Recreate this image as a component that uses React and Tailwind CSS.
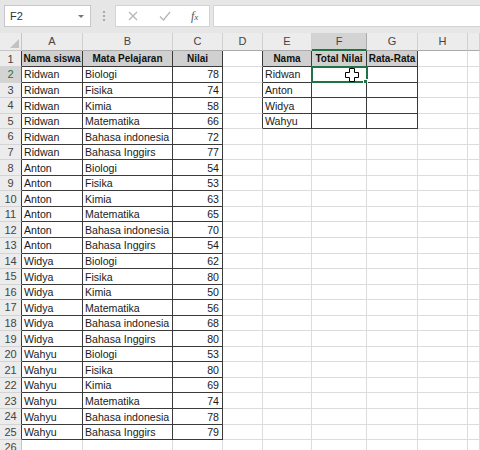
import React from 'react';

// data sheet: nama siswa, mata pelajaran, nilai
const DATA = [
  ['Ridwan', 'Biologi', 78], ['Ridwan', 'Fisika', 74], ['Ridwan', 'Kimia', 58],
  ['Ridwan', 'Matematika', 66], ['Ridwan', 'Bahasa indonesia', 72], ['Ridwan', 'Bahasa Inggirs', 77],
  ['Anton', 'Biologi', 54], ['Anton', 'Fisika', 53], ['Anton', 'Kimia', 63],
  ['Anton', 'Matematika', 65], ['Anton', 'Bahasa indonesia', 70], ['Anton', 'Bahasa Inggirs', 54],
  ['Widya', 'Biologi', 62], ['Widya', 'Fisika', 80], ['Widya', 'Kimia', 50],
  ['Widya', 'Matematika', 56], ['Widya', 'Bahasa indonesia', 68], ['Widya', 'Bahasa Inggirs', 80],
  ['Wahyu', 'Biologi', 53], ['Wahyu', 'Fisika', 80], ['Wahyu', 'Kimia', 69],
  ['Wahyu', 'Matematika', 74], ['Wahyu', 'Bahasa indonesia', 78], ['Wahyu', 'Bahasa Inggirs', 79],
];

const SUMMARY = ['Ridwan', 'Anton', 'Widya', 'Wahyu'];
const COLS = ['A', 'B', 'C', 'D', 'E', 'F', 'G', 'H', ''];
const GRID = 'grid grid-cols-[22px_61px_90px_50px_40px_49px_55px_51px_50px_12px] grid-rows-1';

const inTable = (r, c) => (r >= 1 && r <= 25 && c >= 1 && c <= 3) || (r >= 1 && r <= 5 && c >= 5 && c <= 7);

// text + alignment for one cell
const cellContent = (r, c) => {
  if (r === 1) {
    const head = { 1: 'Nama siswa', 2: 'Mata Pelajaran', 3: 'Nilai', 5: 'Nama', 6: 'Total Nilai', 7: 'Rata-Rata' };
    return head[c] ? { text: head[c], head: true } : null;
  }
  const d = DATA[r - 2];
  if (d && c === 1) return { text: d[0] };
  if (d && c === 2) return { text: d[1] };
  if (d && c === 3) return { text: d[2], right: true };
  if (c === 5 && r <= 5) return { text: SUMMARY[r - 2] };
  return null;
};

const Cell = ({ r, c }) => {
  const dark = inTable(r, c) || (c === 4 && r <= 5) || (c === 0 && r <= 25 && r !== 2);
  const darkBottom = inTable(r, c);
  const content = cellContent(r, c);

  if (c === 0) {
    return (
      <div
        className={`flex min-h-0 items-center justify-center overflow-hidden border-b border-r border-b-[#d4d4d4] pt-[1px] text-[11px] leading-none ${
          r === 2 ? 'bg-[#d3d3d3] text-[#217346] border-r-[#217346]' : 'bg-[#ececec] text-[#444] ' + (dark ? 'border-r-[#3a3a3a]' : 'border-r-[#c6c6c6]')
        }`}
      >
        {r}
      </div>
    );
  }

  return (
    <div
      className={`flex min-h-0 items-center overflow-visible whitespace-nowrap border-b border-r px-[2px] pt-[1px] leading-none ${
        dark ? 'border-r-[#3a3a3a]' : 'border-r-[#dadcdd]'
      } ${darkBottom ? 'border-b-[#3a3a3a]' : 'border-b-[#dadcdd]'} ${
        content && content.head ? 'justify-center bg-[#d0d0d0] text-[10px] font-bold text-[#111]' : 'bg-white text-[10.6px] text-[#1a1a1a]'
      } ${content && content.right ? 'justify-end pr-[3px]' : ''}`}
    >
      {content ? content.text : ''}
    </div>
  );
};

const PlusCursor = () => (
  <svg width="14" height="14" viewBox="0 0 14 14" className="absolute left-[345px] top-[1px]">
    <path d="M4.5 0.5h5v4h4v5h-4v4h-5v-4h-4v-5h4z" fill="#fff" stroke="#000" strokeWidth="1" />
  </svg>
);

const FormulaBar = () => (
  <div className="flex h-[33px] items-start bg-[#e6e6e6] pt-[5px] leading-none">
    <div className="ml-[4px] flex h-[22px] w-[87px] items-center justify-between border border-[#c8c8c8] bg-white pl-[5px] pr-[6px] text-[11px] text-[#333]">
      <span>F2</span>
      <span className="h-0 w-0 border-x-[3px] border-t-[3px] border-x-transparent border-t-[#777]" />
    </div>
    <div className="ml-[11px] mt-[4px] flex h-[14px] w-[4px] flex-col items-center justify-center gap-[2px]">
      <span className="h-[2px] w-[2px] bg-[#a8a8a8]" />
      <span className="h-[2px] w-[2px] bg-[#a8a8a8]" />
      <span className="h-[2px] w-[2px] bg-[#a8a8a8]" />
    </div>
    <div className="ml-[9px] flex h-[22px] w-[95px] items-center border border-[#d4d4d4] bg-white">
      <svg width="10" height="10" viewBox="0 0 10 10" className="ml-[12px]">
        <path d="M1 1L9 9M9 1L1 9" stroke="#b4b4b4" strokeWidth="1.2" />
      </svg>
      <svg width="12" height="10" viewBox="0 0 12 10" className="ml-[21px]">
        <path d="M1 5.5L4.5 9L11 1" stroke="#b4b4b4" strokeWidth="1.2" fill="none" />
      </svg>
      <span className="ml-[20px] font-['Liberation_Serif',serif] text-[12px] italic text-[#555]">
        f<span className="text-[9px]">x</span>
      </span>
    </div>
    <div className="ml-[3px] h-[22px] flex-1 border border-r-0 border-[#d4d4d4] bg-white" />
  </div>
);

export default function App() {
  const rows = Array.from({ length: 26 }, (_, i) => i + 1);

  return (
    <div className="h-[450px] w-[480px] overflow-hidden bg-white font-['Liberation_Sans',Arial,sans-serif] leading-none">
      <FormulaBar />

      {/* column headers */}
      <div className={`${GRID} h-[18px] bg-[#ececec] text-[11px] text-[#444]`}>
        <div className="relative border-b border-r border-[#c6c6c6]">
          <span className="absolute bottom-[2px] right-[2px] h-0 w-0 border-b-[9px] border-l-[9px] border-b-[#c2c2c2] border-l-transparent" />
        </div>
        {COLS.map((l, i) => (
          <div
            key={i}
            className={`flex items-center justify-center border-r ${
              l === 'F' ? 'border-b-2 border-b-[#217346] border-r-[#ababab] bg-[#d3d3d3]' : 'border-b border-b-[#ababab] border-r-[#d0d0d0]'
            }`}
          >
            {l}
          </div>
        ))}
      </div>

      {/* sheet rows */}
      {rows.map((r) => (
        <div key={r} className={`${GRID} relative ${r === 1 ? 'h-[16px]' : 'h-[15.56px]'}`}>
          {Array.from({ length: 10 }, (_, c) => (
            <Cell key={c} r={r} c={c} />
          ))}
          {r === 2 && (
            <>
              <div className="pointer-events-none absolute left-[311px] top-[-1px] h-[17px] w-[57px] border-2 border-[#217346]" />
              <div className="absolute left-[363px] top-[12px] h-[5px] w-[5px] border border-white bg-[#217346]" />
              <PlusCursor />
            </>
          )}
        </div>
      ))}
    </div>
  );
}
